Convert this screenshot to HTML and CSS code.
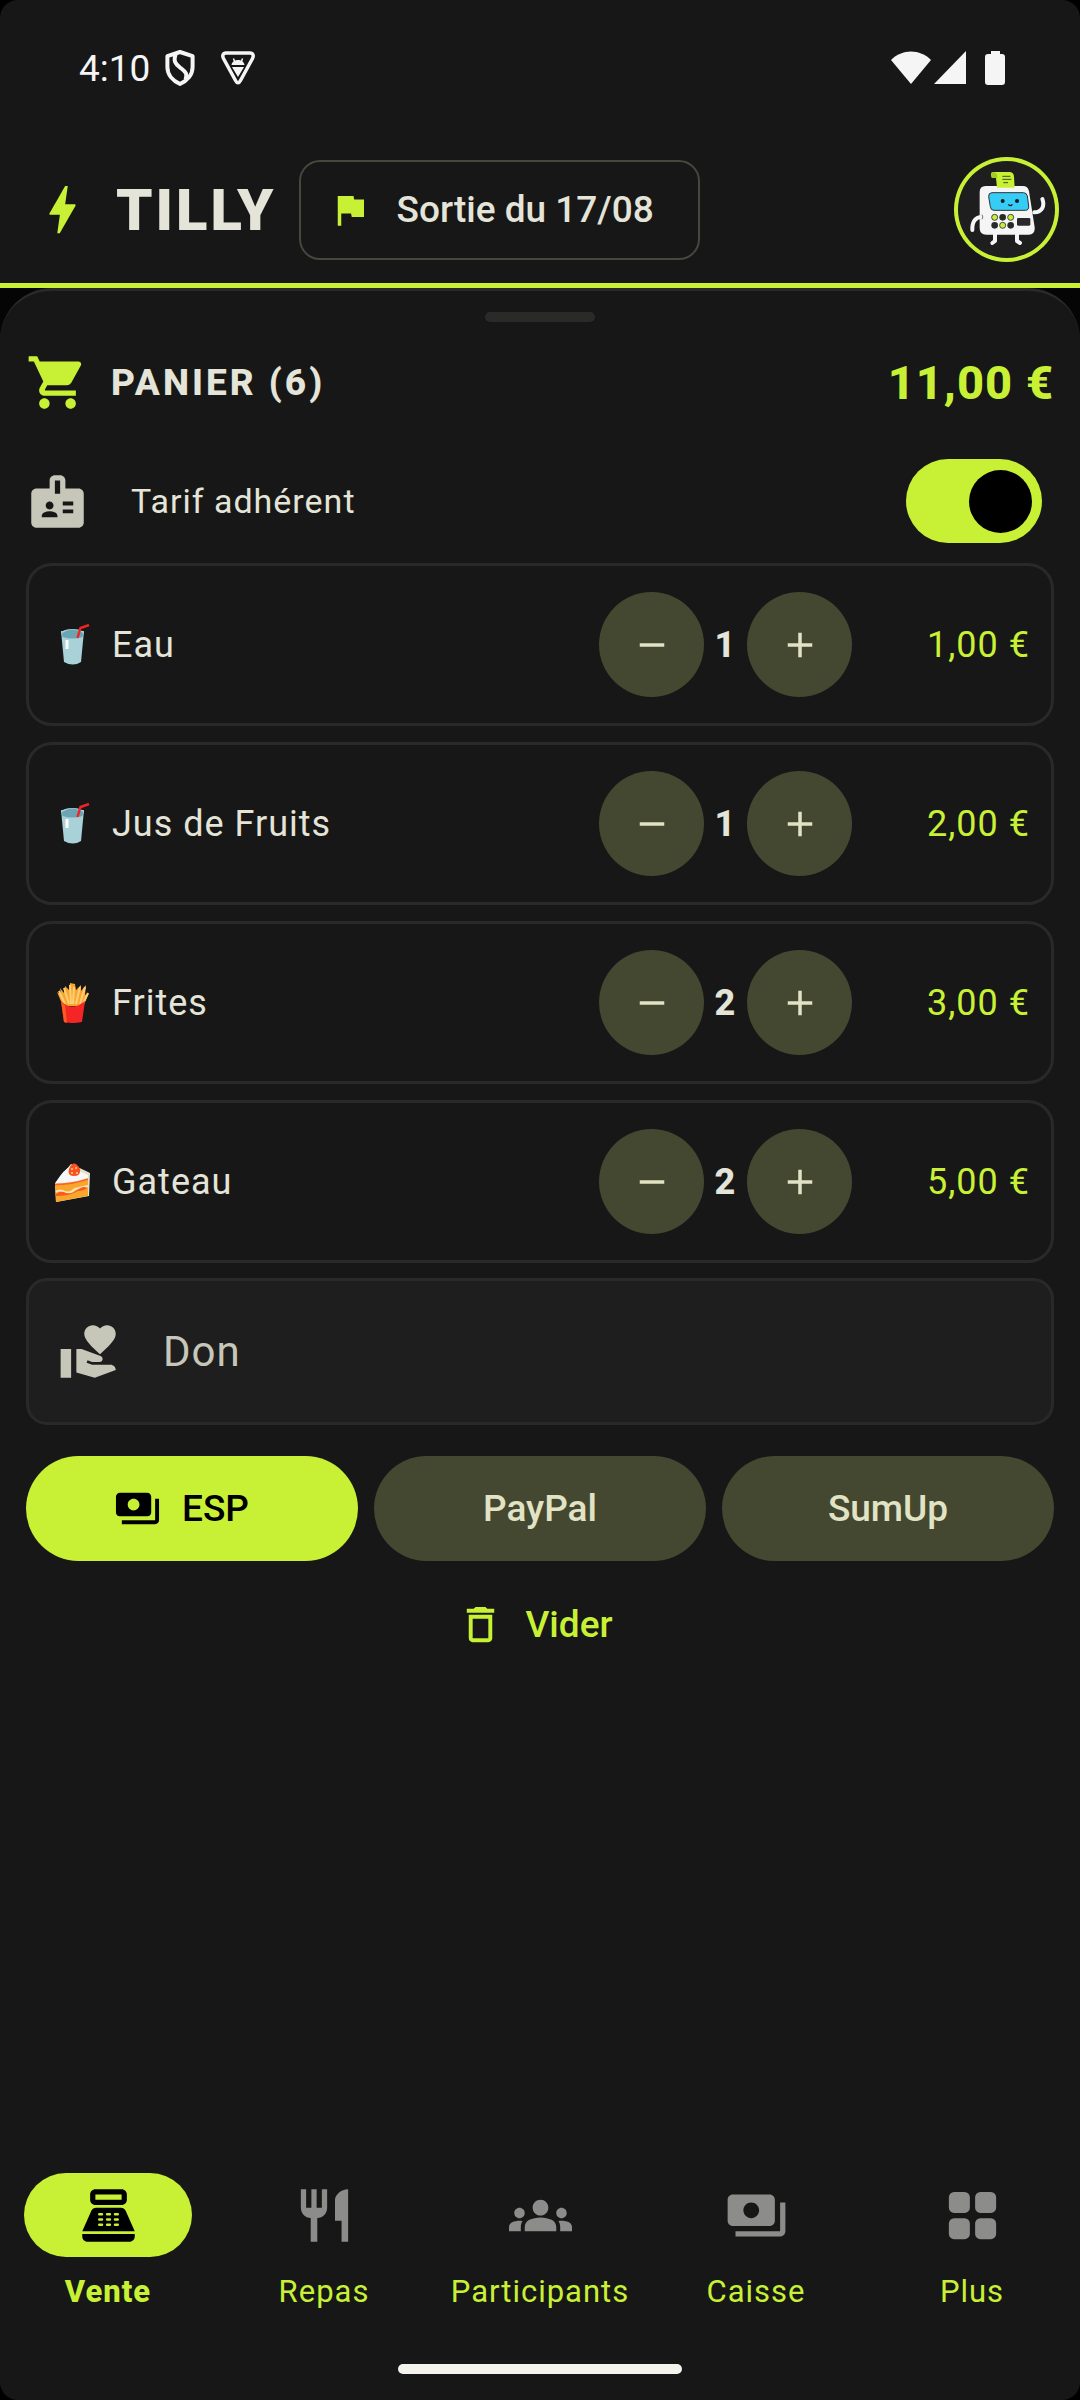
FILE: index.html
```html
<!DOCTYPE html>
<html lang="fr">
<head>
    <meta charset="UTF-8">
    <meta name="viewport" content="width=device-width, initial-scale=1.0">
    <title>TILLY - Panier</title>
    <link rel="stylesheet" href="styles.css">
</head>
<body>
    <div class="screen">
        <div class="status-bar">
            <span class="time">4:10</span>
            <svg class="status-shield" viewBox="0 0 30 36">
                <path d="M15 2 L27.6 6.2 V17 C27.6 25 22 31 15 34 C8 31 2.4 25 2.4 17 V6.2 Z"/>
                <path d="M10.5 4.5 C8.5 11 10 13.500 15 17.500 C20 21.500 23 23 20.500 29.500"/>
            </svg>
            <svg class="status-debug" viewBox="0 0 34 34">
                <path d="M5 2 H29 C32 2 33 4.500 31.500 7.500 L19.500 29.500 C18 32.500 16 32.500 14.500 29.500 L2.500 7.500 C1 4.500 2 2 5 2 Z" fill="none" stroke="#f5f5f5" stroke-width="3.500"/>
                <path d="M10.500 14 C11 10.500 14 9 17 9 C20 9 23 10.500 23.500 14 Z M11 16 H23 L17 26 Z" fill="#f5f5f5"/>
                <path d="M13.500 10.500 L12.500 7.500 M20.500 10.500 L21.500 7.500" stroke="#f5f5f5" stroke-width="1.500"/>
            </svg>
            <span class="spacer"></span>
            <svg class="status-wifi" viewBox="0 0 40 34"><path d="M0 9 C11 -2.500 29 -2.500 40 9 L20 33 Z"/></svg>
            <svg class="status-signal" viewBox="0 0 32 34"><path d="M32 0 V33 H0 Z"/></svg>
            <svg class="status-battery" viewBox="0 0 20 34"><path d="M6 0 H15 V3 H17 Q20 3 20 6 V31 Q20 34 17 34 H3 Q0 34 0 31 V6 Q0 3 3 3 H6 Z"/></svg>
        </div>

        <header class="top-bar">
            <svg class="icon accent" viewBox="0 0 24 24"><path d="M11 21h-1l1-7H7.500c-.88 0-.33-.75-.31-.78C8.480 10.940 10.420 7.540 13.010 3h1l-1 7h3.510c.4 0 .62.190.4.660C12.970 17.550 11 21 11 21z"/></svg>
            <h1>TILLY</h1>
            <button type="button" class="event-chip">
                <svg class="icon-small accent" viewBox="0 0 24 24"><path d="M14.400 6L14 4H5v17h2v-7h5.600l.4 2h7V6z"/></svg>
                Sortie du 17/08
            </button>
            <button type="button" class="avatar" aria-label="Profil">
                <svg viewBox="42 21 315 315">
                    <g fill="none" stroke="#f5f5f5" stroke-width="12" stroke-linecap="round" stroke-linejoin="round">
                        <path d="M126 201 C107 201 96 214 97 240"/>
                        <path d="M283 187 C306 186 315 168 307 147"/>
                        <path d="M165 252 V273 L157 279"/>
                        <path d="M231 252 V273 L240 279"/>
                    </g>
                    <path d="M137 108 H248 Q264 108 267 124 L284 232 Q286 254 266 254 H139 Q119 254 119 234 V126 Q119 108 137 108 Z" fill="#f5f5f5"/>
                    <path d="M126 194 Q131 201 126 208" fill="none" stroke="#777" stroke-width="3"/>
                    <path d="M160 66 H208 Q221 66 222 80 L224 113 H171 L168 84 H156 Q148 66 160 66 Z" fill="#c8f135"/>
                    <path d="M160 66 Q173 68 172 84 H156 Q148 66 160 66 Z" fill="#a4cc26"/>
                    <path d="M187 79 H211 M187 88 H214 M190 98 H204" stroke="#3f4a16" stroke-width="3"/>
                    <path d="M156 128 H250 Q260 128 262 138 L266 168 Q267 181 256 181 H162 Q152 181 151 170 L146 140 Q145 128 156 128 Z" fill="#35cdf5" stroke="#333" stroke-width="3"/>
                    <circle cx="188" cy="153" r="6" fill="#171717"/>
                    <circle cx="231" cy="153" r="6" fill="#171717"/>
                    <path d="M205 163 Q211 171 217 163" fill="none" stroke="#171717" stroke-width="4"/>
                    <g fill="#c8f135" stroke="#444" stroke-width="3">
                        <circle cx="164" cy="202" r="9"/>
                        <circle cx="212" cy="202" r="9"/>
                        <circle cx="188" cy="226" r="9"/>
                    </g>
                    <g fill="#292929">
                        <circle cx="188" cy="202" r="10"/>
                        <circle cx="164" cy="226" r="10"/>
                        <circle cx="212" cy="226" r="10"/>
                        <rect x="231" y="204" width="40" height="23" rx="4"/>
                    </g>
                </svg>
            </button>
        </header>

        <main class="sheet">
            <div class="handle"></div>

            <div class="cart-header">
                <svg class="icon accent" viewBox="0 0 24 24"><path d="M7 18c-1.100 0-1.990.9-1.990 2S5.900 22 7 22s2-.9 2-2-.9-2-2-2zM1 2v2h2l3.600 7.590-1.350 2.450c-.16.280-.25.610-.25.960 0 1.100.9 2 2 2h12v-2H7.420c-.14 0-.25-.11-.25-.25l.03-.12.9-1.630h7.450c.75 0 1.410-.41 1.750-1.030l3.580-6.490c.08-.14.120-.31.120-.48 0-.55-.45-1-1-1H5.210l-.94-2H1zm16 16c-1.100 0-1.990.9-1.990 2s.89 2 1.990 2 2-.9 2-2-.9-2-2-2z"/></svg>
                <h2>PANIER (6)</h2>
                <strong class="total">11,00 €</strong>
            </div>

            <label class="member-row" for="member">
                <svg class="icon muted" viewBox="0 0 24 24"><path fill-rule="evenodd" d="M20 7h-5V4c0-1.100-.9-2-2-2h-2c-1.100 0-2 .9-2 2v3H4c-1.100 0-2 .9-2 2v11c0 1.100.9 2 2 2h16c1.100 0 2-.9 2-2V9c0-1.100-.9-2-2-2zM11 4h2v5h-2V4zM9 12c.83 0 1.500.67 1.500 1.500S9.830 15 9 15s-1.500-.67-1.500-1.500S8.170 12 9 12zM12 18H6v-.43c0-.6.360-1.150.920-1.390C7.560 15.900 8.260 15.750 9 15.750s1.440.15 2.080.43c.56.240.92.790.92 1.390V18zM18 16.500h-4V15h4v1.500zM18 13.500h-4V12h4v1.500z"/></svg>
                <span>Tarif adhérent</span>
                <input type="checkbox" role="switch" id="member" class="switch" checked>
            </label>

            <ul class="items">
                <li class="item">
                    <svg class="emoji" viewBox="0 0 42 42"><path d="M9 7 L12 38 Q21 43 29 38 L32 7 Z" fill="#a8d1d8"/><ellipse cx="20.500" cy="9" rx="11.500" ry="4" fill="#a8d1d8"/><path d="M10 9 Q20.500 2 31 9 L30.500 13 Q20 16 10.500 13 Z" fill="#6ba5b3"/><path d="M15 16 V25" stroke="#fff" stroke-width="3"/><path d="M25.500 14 L28.500 4 L37 1" fill="none" stroke="#ef2525" stroke-width="2.500"/></svg>
                    <span class="name">Eau</span>
                    <div class="stepper">
                        <button type="button" aria-label="Retirer Eau"><svg viewBox="0 0 24 24"><path d="M19 13H5v-2h14z"/></svg></button>
                        <span class="count">1</span>
                        <button type="button" aria-label="Ajouter Eau"><svg viewBox="0 0 24 24"><path d="M19 13h-6v6h-2v-6H5v-2h6V5h2v6h6z"/></svg></button>
                    </div>
                    <span class="price">1,00 €</span>
                </li>
                <li class="item">
                    <svg class="emoji" viewBox="0 0 42 42"><path d="M9 7 L12 38 Q21 43 29 38 L32 7 Z" fill="#a8d1d8"/><ellipse cx="20.500" cy="9" rx="11.500" ry="4" fill="#a8d1d8"/><path d="M10 9 Q20.500 2 31 9 L30.500 13 Q20 16 10.500 13 Z" fill="#6ba5b3"/><path d="M15 16 V25" stroke="#fff" stroke-width="3"/><path d="M25.500 14 L28.500 4 L37 1" fill="none" stroke="#ef2525" stroke-width="2.500"/></svg>
                    <span class="name">Jus de Fruits</span>
                    <div class="stepper">
                        <button type="button" aria-label="Retirer Jus de Fruits"><svg viewBox="0 0 24 24"><path d="M19 13H5v-2h14z"/></svg></button>
                        <span class="count">1</span>
                        <button type="button" aria-label="Ajouter Jus de Fruits"><svg viewBox="0 0 24 24"><path d="M19 13h-6v6h-2v-6H5v-2h6V5h2v6h6z"/></svg></button>
                    </div>
                    <span class="price">2,00 €</span>
                </li>
                <li class="item">
                    <svg class="emoji" viewBox="0 0 42 42"><path d="M5 10 L11 24 H31 L37 11 L33 13 L34 3 L29 9 L29 3 L24 8 L23 2 L18 1 L17 8 L13 4 L12 11 L8 6 L9 13 Z" fill="#faa62b"/><path d="M7 9 L13 22 M12 6 L17 22 M18 3 L19 22 M22 5 L21 22 M28 5 L24 22 M33 5 L28 22 M36 11 L31 22" stroke="#fdcf7a" stroke-width="2" fill="none"/><path d="M9 19 Q20 30 33 19 L30 40 Q20 42 12 40 Z" fill="#f42525"/><path d="M9 19 L13 23 L15 41 L12 40 Z" fill="#fb5a21"/></svg>
                    <span class="name">Frites</span>
                    <div class="stepper">
                        <button type="button" aria-label="Retirer Frites"><svg viewBox="0 0 24 24"><path d="M19 13H5v-2h14z"/></svg></button>
                        <span class="count">2</span>
                        <button type="button" aria-label="Ajouter Frites"><svg viewBox="0 0 24 24"><path d="M19 13h-6v6h-2v-6H5v-2h6V5h2v6h6z"/></svg></button>
                    </div>
                    <span class="price">3,00 €</span>
                </li>
                <li class="item">
                    <svg class="emoji" viewBox="0 0 42 42"><path d="M3 22 L19 3 L34 10 L38 12 L37 35 L4 41 Z" fill="#e2e2cc"/><path d="M4 21 Q12 8 18 6 L36 14 V17 Q20 22 4 22 Z" fill="#f7f7f7"/><path d="M3 24 Q20 24 36 18 V35 L4 41 Z" fill="#faa62b"/><path d="M3 23.500 Q20 23.500 36 18" fill="none" stroke="#fb6423" stroke-width="1.500"/><path d="M4 31 Q7 28 13 31 Q18 33 23 28 L36 25" fill="none" stroke="#f7e6c0" stroke-width="2"/><path d="M4 33 Q9 29 14 32 Q20 33 24 30 Q31 24 35 27 Q32 30 26 30 Q18 35 4 35 Z" fill="#fb5a21"/><path d="M17 8 Q22 -3 28 8 Q29 15 22 15 Q15 15 17 8 Z" fill="#fb5021"/><path d="M20 7 V9 M24 6 V8 M20 11 V13 M25 11 V13" stroke="#fdcf7a" stroke-width="1.500"/></svg>
                    <span class="name">Gateau</span>
                    <div class="stepper">
                        <button type="button" aria-label="Retirer Gateau"><svg viewBox="0 0 24 24"><path d="M19 13H5v-2h14z"/></svg></button>
                        <span class="count">2</span>
                        <button type="button" aria-label="Ajouter Gateau"><svg viewBox="0 0 24 24"><path d="M19 13h-6v6h-2v-6H5v-2h6V5h2v6h6z"/></svg></button>
                    </div>
                    <span class="price">5,00 €</span>
                </li>
            </ul>

            <label class="donation" for="don">
                <svg class="icon muted" viewBox="0 0 24 24"><path d="M1 11h4v11H1zM16 3.250C16.650 2.490 17.660 2 18.700 2 20.550 2 22 3.450 22 5.300c0 2.270-2.910 4.900-6 7.700-3.090-2.810-6-5.440-6-7.700C10 3.450 11.450 2 13.300 2c1.040 0 2.050.49 2.700 1.250zM20 17h-7l-2.090-.73.330-.94L13 16h2.820c.65 0 1.180-.53 1.180-1.180 0-.49-.31-.93-.77-1.110L8.970 11H7v9.020L14 22l8.010-3c-.01-1.100-.91-2-2.010-2z"/></svg>
                <input type="text" id="don" placeholder="Don" aria-label="Don" inputmode="decimal">
            </label>

            <div class="payments">
                <button type="button" class="pay primary">
                    <svg class="icon-medium" viewBox="0 0 24 24"><path d="M19 14V6c0-1.100-.9-2-2-2H3c-1.100 0-2 .9-2 2v8c0 1.100.9 2 2 2h14c1.100 0 2-.9 2-2zm-9-1c-1.660 0-3-1.340-3-3s1.340-3 3-3 3 1.340 3 3-1.340 3-3 3zm13-6v11c0 1.100-.9 2-2 2H4v-2h17V7h2z"/></svg>
                    ESP
                </button>
                <button type="button" class="pay">PayPal</button>
                <button type="button" class="pay">SumUp</button>
            </div>

            <button type="button" class="clear">
                <svg class="icon-medium" viewBox="0 0 24 24"><path fill-rule="evenodd" d="M6 19c0 1.100.9 2 2 2h8c1.100 0 2-.9 2-2V7H6v12zM8 9h8v10H8V9zM15.500 4l-1-1h-5l-1 1H5v2h14V4z"/></svg>
                Vider
            </button>
        </main>

        <nav class="bottom-nav">
            <a href="#vente" class="active">
                <span class="nav-icon"><svg class="icon" viewBox="0 0 24 24"><path fill-rule="evenodd" d="M17 2H7c-1.100 0-2 .9-2 2v2c0 1.100.9 2 2 2h10c1.100 0 2-.9 2-2V4c0-1.100-.9-2-2-2zM17 6H7V4h10v2zM20 22H4c-1.100 0-2-.9-2-2v-1h20v1c0 1.100-.9 2-2 2zM18.530 10.190C18.210 9.470 17.490 9 16.700 9H7.300c-.79 0-1.510.47-1.830 1.190L2 18h20l-3.470-7.810zM8.500 15h1a.5.5 0 0 1 0 1h-1a.5.5 0 0 1 0-1zM8.500 13h1a.5.5 0 0 1 0 1h-1a.5.5 0 0 1 0-1zM8.500 11h1a.5.5 0 0 1 0 1h-1a.5.5 0 0 1 0-1zM11.500 15h1a.5.5 0 0 1 0 1h-1a.5.5 0 0 1 0-1zM11.500 13h1a.5.5 0 0 1 0 1h-1a.5.5 0 0 1 0-1zM11.500 11h1a.5.5 0 0 1 0 1h-1a.5.5 0 0 1 0-1zM14.500 15h1a.5.5 0 0 1 0 1h-1a.5.5 0 0 1 0-1zM14.500 13h1a.5.5 0 0 1 0 1h-1a.5.5 0 0 1 0-1zM14.500 11h1a.5.5 0 0 1 0 1h-1a.5.5 0 0 1 0-1z"/></svg></span>
                Vente
            </a>
            <a href="#repas">
                <span class="nav-icon"><svg class="icon" viewBox="0 0 24 24"><path d="M11 9H9V2H7v7H5V2H3v7c0 2.120 1.660 3.840 3.750 3.970V22h2.500v-9.030C11.340 12.840 13 11.120 13 9V2h-2v7zm5-3v8h2.500v8H21V2c-2.760 0-5 2.240-5 4z"/></svg></span>
                Repas
            </a>
            <a href="#participants">
                <span class="nav-icon"><svg class="icon" viewBox="0 0 24 24"><path d="M12 12.750c1.630 0 3.070.39 4.240.9 1.080.48 1.760 1.560 1.760 2.730V18H6v-1.610c0-1.180.68-2.260 1.760-2.730 1.170-.52 2.610-.91 4.240-.91zM4 13c1.100 0 2-.9 2-2s-.9-2-2-2-2 .9-2 2 .9 2 2 2zm1.130 1.100c-.37-.06-.74-.1-1.130-.1-.99 0-1.930.21-2.780.58C.48 14.900 0 15.620 0 16.430V18h4.500v-1.610c0-.83.23-1.610.63-2.290zM20 13c1.100 0 2-.9 2-2s-.9-2-2-2-2 .9-2 2 .9 2 2 2zm4 3.430c0-.81-.48-1.530-1.220-1.850-.85-.37-1.790-.58-2.780-.58-.39 0-.76.04-1.130.1.4.68.63 1.460.63 2.290V18H24v-1.570zM12 6c1.660 0 3 1.340 3 3s-1.340 3-3 3-3-1.340-3-3 1.340-3 3-3z"/></svg></span>
                Participants
            </a>
            <a href="#caisse">
                <span class="nav-icon"><svg class="icon" viewBox="0 0 24 24"><path d="M19 14V6c0-1.100-.9-2-2-2H3c-1.100 0-2 .9-2 2v8c0 1.100.9 2 2 2h14c1.100 0 2-.9 2-2zm-9-1c-1.660 0-3-1.340-3-3s1.340-3 3-3 3 1.340 3 3-1.340 3-3 3zm13-6v11c0 1.100-.9 2-2 2H4v-2h17V7h2z"/></svg></span>
                Caisse
            </a>
            <a href="#plus">
                <span class="nav-icon"><svg class="icon" viewBox="0 0 24 24"><rect x="3" y="3" width="8" height="8" rx="2"/><rect x="13" y="3" width="8" height="8" rx="2"/><rect x="3" y="13" width="8" height="8" rx="2"/><rect x="13" y="13" width="8" height="8" rx="2"/></svg></span>
                Plus
            </a>
        </nav>
        <div class="home-bar"></div>
    </div>
</body>
</html>
```

FILE: styles.css
```css
* {
    box-sizing: border-box;
}

body {
    margin: 0;
    background-color: #000;
    font-family: Roboto, sans-serif;
    font-size: 37px;
    color: #e4e4d8;
}

h1, h2, ul {
    margin: 0;
    padding: 0;
}

button, input {
    font: inherit;
    color: inherit;
    border: none;
    margin: 0;
    padding: 0;
}

button {
    cursor: pointer;
}

svg {
    display: block;
    flex: none;
    fill: currentColor;
}

.screen {
    display: flex;
    flex-direction: column;
    min-height: 100vh;
    background-color: #171717;
    border-radius: 18px;
    overflow: hidden;
}

.icon {
    width: 63px;
    height: 63px;
}

.icon-medium {
    width: 47px;
    height: 47px;
}

.icon-small {
    width: 42px;
    height: 42px;
}

.accent {
    color: #c8f135;
}

.muted {
    color: #c6c7b9;
}

/* Status bar */
.status-bar {
    display: flex;
    align-items: center;
    height: 136px;
    padding: 0 75px 0 79px;
    color: #f5f5f5;
}

.status-shield {
    width: 30px;
    height: 36px;
    margin: 0 26px 0 15px;
    fill: none;
    stroke: currentColor;
    stroke-width: 4;
    stroke-linejoin: round;
}

.status-debug {
    width: 34px;
    height: 34px;
}

.spacer {
    flex: 1;
}

.status-wifi {
    width: 40px;
    height: 34px;
}

.status-signal {
    width: 32px;
    height: 34px;
    margin: 0 19px 0 3px;
}

.status-battery {
    width: 20px;
    height: 34px;
}

/* Header */
.top-bar {
    display: flex;
    align-items: center;
    gap: 22px;
    height: 152px;
    padding: 0 21px 0 31px;
    border-bottom: 5px solid #c8f135;
}

h1 {
    font-size: 58px;
    font-weight: 900;
    letter-spacing: 3px;
}

.event-chip {
    display: flex;
    align-items: center;
    gap: 26px;
    height: 100px;
    padding: 0 44px 0 28px;
    background: none;
    border: 2px solid #46483e;
    border-radius: 21px;
    font-weight: 500;
}

.avatar {
    width: 105px;
    height: 105px;
    margin-left: auto;
    border-radius: 50%;
    background-color: #1e1e1e;
    box-shadow: inset 0 0 0 4px #c8f135;
}

/* Cart sheet */
.sheet {
    flex: 1;
    display: flex;
    flex-direction: column;
    padding: 21px 26px;
    background-color: #171717;
    border-top: 3px solid #292928;
    border-radius: 52px 52px 0 0;
    box-shadow: 0 -40px 0 40px #050505;
    clip-path: inset(0);
}

.handle {
    width: 110px;
    height: 10px;
    margin: 0 auto 29px;
    border-radius: 5px;
    background-color: #2a2a28;
}

.cart-header {
    display: flex;
    align-items: center;
    gap: 22px;
    height: 63px;
    margin-bottom: 45px;
}

h2 {
    flex: 1;
    font-size: 37px;
    font-weight: 800;
    letter-spacing: 3px;
}

.total {
    font-size: 47px;
    font-weight: 800;
    letter-spacing: 1px;
    color: #c8f135;
}

.member-row {
    display: flex;
    align-items: center;
    gap: 42px;
    height: 84px;
    padding-right: 12px;
    margin-bottom: 20px;
    font-size: 34px;
    letter-spacing: 1px;
}

.member-row span {
    flex: 1;
}

.switch {
    appearance: none;
    display: flex;
    align-items: center;
    width: 136px;
    height: 84px;
    padding: 0 10px;
    border-radius: 42px;
    background-color: #454830;
}

.switch::before {
    content: "";
    width: 63px;
    height: 63px;
    border-radius: 50%;
    background-color: #000;
}

.switch:checked {
    justify-content: flex-end;
    background-color: #c8f135;
}

.items {
    display: flex;
    flex-direction: column;
    gap: 16px;
    margin-bottom: 15px;
    list-style: none;
}

.item {
    display: flex;
    align-items: center;
    gap: 18px;
    padding: 26px 21px 26px 23px;
    border: 3px solid #292928;
    border-radius: 26px;
    font-size: 36px;
    letter-spacing: 1px;
}

.emoji {
    width: 42px;
    height: 42px;
}

.name {
    flex: 1;
}

.stepper {
    display: flex;
    align-items: center;
}

.stepper button {
    display: grid;
    place-items: center;
    width: 105px;
    height: 105px;
    border-radius: 50%;
    background-color: #454830;
    color: #e2e3c4;
}

.stepper svg {
    width: 42px;
    height: 42px;
}

.count {
    width: 43px;
    text-align: center;
    font-weight: 800;
}

.price {
    width: 160px;
    text-align: right;
    color: #c8f135;
}

.donation {
    display: flex;
    align-items: center;
    gap: 42px;
    height: 147px;
    margin-bottom: 31px;
    padding: 0 29px;
    border: 3px solid #292928;
    border-radius: 21px;
    background-color: #1e1e1e;
}

.donation input {
    flex: 1;
    min-width: 0;
    background: none;
    font-size: 42px;
    letter-spacing: 1px;
    outline: none;
}

.donation input::placeholder {
    color: #c6c7b9;
    opacity: 1;
}

/* Payment buttons */
.payments {
    display: grid;
    grid-template-columns: repeat(3, 1fr);
    gap: 16px;
    margin-bottom: 21px;
}

.pay {
    display: flex;
    align-items: center;
    justify-content: center;
    gap: 21px;
    height: 105px;
    border-radius: 53px;
    background-color: #454830;
    color: #e2e3c4;
    font-weight: 500;
}

.pay.primary {
    padding-right: 21px;
    background-color: #c8f135;
    color: #000;
}

.clear {
    display: flex;
    align-items: center;
    gap: 21px;
    align-self: center;
    height: 84px;
    padding: 0 42px 0 32px;
    background: none;
    color: #c8f135;
    font-weight: 500;
}

/* Bottom navigation */
.bottom-nav {
    display: grid;
    grid-template-columns: repeat(5, 1fr);
}

.bottom-nav a {
    display: flex;
    flex-direction: column;
    align-items: center;
    gap: 14px;
    color: #c8f135;
    font-size: 31px;
    line-height: 42px;
    letter-spacing: 1px;
    text-decoration: none;
}

.nav-icon {
    display: grid;
    place-items: center;
    width: 168px;
    height: 84px;
    border-radius: 42px;
    color: #8c8c8a;
}

.bottom-nav .active {
    font-weight: 800;
}

.active .nav-icon {
    background-color: #c8f135;
    color: #000;
}

.home-bar {
    width: 284px;
    height: 10px;
    margin: 51px auto 26px;
    border-radius: 5px;
    background-color: #f4f4ec;
}
```
